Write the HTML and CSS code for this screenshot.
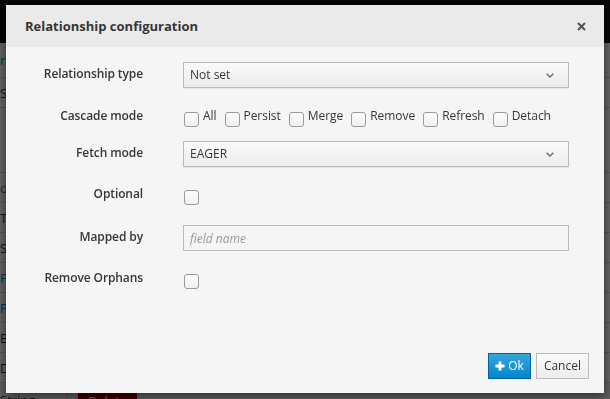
FILE: index.html
```html
<!DOCTYPE html>
<html>
    <head>
        <title>Relationship configuration</title>
        <link rel="stylesheet" href="styles.css">
    </head>
    <body>
        <div class="page">
            <div class="navbar"></div>
            <div class="list-row tall link">rojects</div>
            <div class="list-row">Save</div>
            <div class="list-row blank"></div>
            <div class="list-row link">dentifier</div>
            <div class="list-row">Type</div>
            <div class="list-row">String</div>
            <div class="list-row link">Person</div>
            <div class="list-row link">Phone</div>
            <div class="list-row">Boolean</div>
            <div class="list-row">Date</div>
            <div class="list-row last">
                <span class="cell">String</span>
                <span class="btn-danger">Delete</span>
            </div>
        </div>

        <div class="backdrop"></div>

        <div class="modal">
            <div class="modal-header">
                <h4 class="modal-title">Relationship configuration</h4>
                <span class="close">
                    <svg width="9" height="9" viewBox="0 0 9 9"><path d="M1 1L8 8M8 1L1 8" stroke="#4d5258" stroke-width="2"/></svg>
                </span>
            </div>

            <div class="modal-body">
                <div class="form-group first">
                    <label class="control-label">Relationship type</label>
                    <div class="select">
                        <span>Not set</span>
                        <svg width="8" height="5" viewBox="0 0 8 5"><path d="M0.7 0.7L4 4L7.3 0.7" fill="none" stroke="#5c6a78" stroke-width="1.3"/></svg>
                    </div>
                </div>

                <div class="form-group cascade">
                    <label class="control-label">Cascade mode</label>
                    <div class="checks">
                        <label class="check"><span class="box"></span>All</label>
                        <label class="check"><span class="box"></span>Persist</label>
                        <label class="check"><span class="box"></span>Merge</label>
                        <label class="check"><span class="box"></span>Remove</label>
                        <label class="check"><span class="box"></span>Refresh</label>
                        <label class="check"><span class="box"></span>Detach</label>
                    </div>
                </div>

                <div class="form-group">
                    <label class="control-label">Fetch mode</label>
                    <div class="select">
                        <span>EAGER</span>
                        <svg width="8" height="5" viewBox="0 0 8 5"><path d="M0.7 0.7L4 4L7.3 0.7" fill="none" stroke="#5c6a78" stroke-width="1.3"/></svg>
                    </div>
                </div>

                <div class="form-group">
                    <label class="control-label">Optional</label>
                    <div class="checks"><span class="box"></span></div>
                </div>

                <div class="form-group">
                    <label class="control-label">Mapped by</label>
                    <input class="input" type="text" placeholder="field name">
                </div>

                <div class="form-group">
                    <label class="control-label">Remove Orphans</label>
                    <div class="checks"><span class="box"></span></div>
                </div>
            </div>

            <div class="modal-footer">
                <button class="btn btn-primary">
                    <svg width="10" height="10" viewBox="0 0 10 10"><path d="M3.6 0.5h2.8v3.1h3.1v2.8H6.4v3.1H3.6V6.4H0.5V3.6h3.1z" fill="#fff"/></svg>
                    Ok
                </button>
                <button class="btn btn-default">Cancel</button>
            </div>
        </div>
    </body>
</html>
```

FILE: styles.css
```css
* {
  box-sizing: border-box;
}

html, body {
  margin: 0;
  height: 100%;
}

body {
  font-family: "Open Sans", "Noto Sans", sans-serif;
  font-size: 12px;
  color: #363636;
  background: #fff;
  overflow: hidden;
}

/* page behind the dialog */
.page {
  height: 100%;
  overflow: hidden;
}

.navbar {
  height: 43px;
  background: #101010;
}

.list-row {
  height: 30px;
  line-height: 30px;
  font-size: 13px;
  border-bottom: 1px solid #d6d6d6;
  white-space: nowrap;
}

.list-row.tall {
  height: 35px;
  line-height: 35px;
}

.list-row.blank {
  height: 65px;
}

.list-row.link {
  color: #0088ce;
}

.list-row.last {
  display: flex;
  align-items: flex-start;
  background: #f2f2f2;
  line-height: 18px;
}

.cell {
  width: 68px;
  height: 30px;
  border-right: 1px solid #ccc;
  padding-top: 8px;
}

.btn-danger {
  margin: 9px 0 0 10px;
  width: 59px;
  height: 24px;
  text-align: center;
  color: #fff;
  background: #a30000;
}

.backdrop {
  position: fixed;
  top: 0;
  left: 0;
  right: 0;
  bottom: 0;
  background: rgba(0, 0, 0, 0.62);
}

/* dialog */
.modal {
  position: fixed;
  left: 6px;
  top: 5px;
  width: 598px;
  height: 388px;
  background: #f5f5f5;
  box-shadow: 0 3px 9px rgba(0, 0, 0, 0.5);
  display: flex;
  flex-direction: column;
}

.modal-header {
  height: 42px;
  flex: none;
  background: #eaeaea;
  display: flex;
  align-items: center;
  justify-content: space-between;
  padding: 0 18px 0 19px;
}

.modal-title {
  margin: 0;
  font-size: 13px;
  font-weight: 700;
  line-height: 18px;
}

.close {
  display: flex;
  margin-top: 1px;
}

.modal-body {
  flex: 1;
  padding-top: 15px;
}

.form-group {
  display: grid;
  grid-template-columns: 137px 386px;
  column-gap: 40px;
  align-items: start;
  margin-bottom: 19px;
}

.form-group.first {
  margin-bottom: 20px;
}

.form-group.cascade {
  margin-bottom: 13px;
}

.control-label {
  text-align: right;
  font-weight: 600;
  line-height: 16px;
  padding-top: 4px;
  letter-spacing: -0.1px;
}

.cascade .control-label,
.form-group:nth-child(4) .control-label,
.form-group:nth-child(6) .control-label {
  padding-top: 0;
}

.select {
  height: 26px;
  border: 1px solid #bbb;
  background: linear-gradient(#fafafa, #ececec);
  box-shadow: 0 1px 1px rgba(0, 0, 0, 0.06);
  padding: 0 14px 0 6px;
  line-height: 24px;
  display: flex;
  align-items: center;
  justify-content: space-between;
}

.input {
  height: 26px;
  border: 1px solid #bbb;
  background: #f5f5f5;
  padding: 0 6px;
  font-family: inherit;
  font-size: 12px;
  color: #363636;
  outline: none;
}

.input::placeholder {
  color: #999;
  font-style: italic;
}

.checks {
  display: flex;
  align-items: flex-start;
  height: 20px;
  line-height: 16px;
}

.check {
  display: flex;
  align-items: flex-start;
  margin-right: 7px;
  letter-spacing: -0.05px;
}

.box {
  width: 15px;
  height: 15px;
  margin: 4px 4px 0 1px;
  border: 1px solid #9a9a9a;
  border-radius: 3px;
  background: linear-gradient(#fdfdfd, #f0f0f0);
}

.modal-footer {
  display: flex;
  justify-content: flex-end;
  gap: 5px;
  padding: 0 15px 14px;
}

.btn {
  height: 26px;
  padding: 0 6px;
  font-family: inherit;
  font-size: 12px;
  line-height: 24px;
  display: flex;
  align-items: center;
  gap: 3px;
}

.btn-primary {
  color: #fff;
  border: 1px solid #00659c;
  background: linear-gradient(#39a5dc, #0088ce);
}

.btn-default {
  color: #363636;
  padding: 0 7px;
  border: 1px solid #bbb;
  background: linear-gradient(#fafafa, #ededed);
}
```
